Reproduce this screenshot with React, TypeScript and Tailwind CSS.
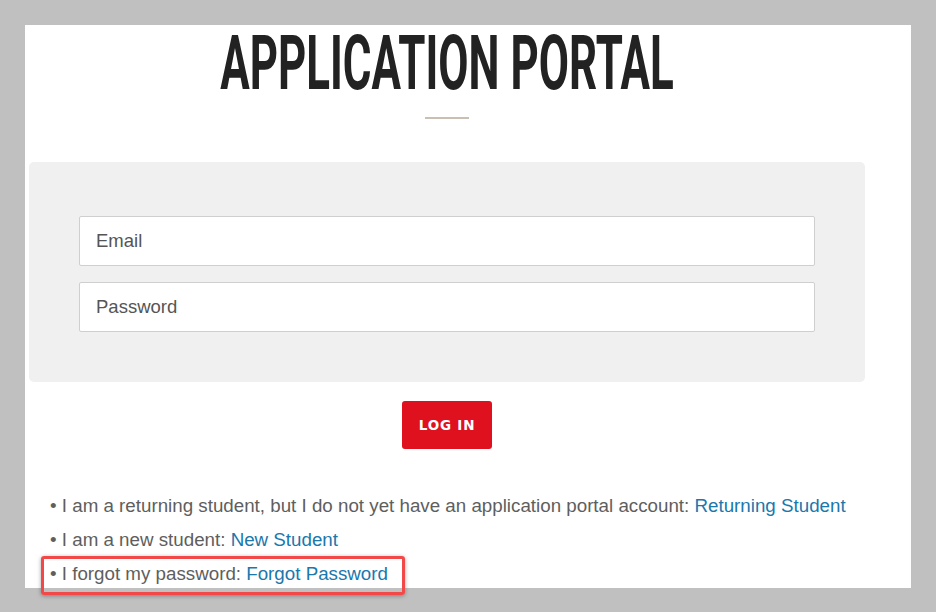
import { useState } from 'react';

const links = [
  { text: 'I am a returning student, but I do not yet have an application portal account:', link: 'Returning Student' },
  { text: 'I am a new student:', link: 'New Student' },
  { text: 'I forgot my password:', link: 'Forgot Password' },
];

export default function App() {
  const [email, setEmail] = useState('');
  const [password, setPassword] = useState('');

  return (
    <div className="h-[612px] overflow-hidden bg-[#c0c0c0] pl-[25px] pt-[25px] font-['Liberation_Sans',Arial,sans-serif]">
      <div className="relative h-[563px] w-[886px] bg-white">
        <div className="ml-[4px] flex w-[836px] flex-col items-center">
          {/* Title */}
          <h1 className="flex h-[77px] items-start justify-center">
            <span className="inline-block origin-center scale-x-[0.577] whitespace-nowrap font-['Roboto',sans-serif] text-[76px] font-bold leading-[76px] text-[#222]">
              APPLICATION PORTAL
            </span>
          </h1>
          <div className="mt-[15px] h-[2px] w-[44px] bg-[#c9bfb3]" />

          {/* Login form */}
          <form className="mt-[43px] flex w-full flex-col gap-4 rounded-[5px] bg-[#f0f0f0] px-[50px] pb-[50px] pt-[54px]">
            <input
              type="email"
              value={email}
              onChange={(e) => setEmail(e.target.value)}
              placeholder="Email"
              className="h-[50px] w-full rounded-[2px] border border-[#cfcfcf] bg-white px-4 text-[18.5px] text-[#555] outline-none placeholder:text-[#555]"
            />
            <input
              type="password"
              value={password}
              onChange={(e) => setPassword(e.target.value)}
              placeholder="Password"
              className="h-[50px] w-full rounded-[2px] border border-[#cfcfcf] bg-white px-4 text-[18.5px] text-[#555] outline-none placeholder:text-[#555]"
            />
          </form>

          <button
            type="button"
            className="mt-[19px] h-[48px] w-[90px] rounded-[3px] bg-[#df111f] font-['DejaVu_Sans',sans-serif] text-[13.5px] font-bold tracking-[0.8px] text-white"
          >
            LOG IN
          </button>

          {/* Links */}
          <ul className="mt-[40px] w-full pl-[21px] text-[18.75px] leading-[34px] text-[#5e5e5e]">
            {links.map((item) => (
              <li key={item.link} className="whitespace-nowrap">
                • {item.text}{' '}
                <a href="#" className="text-[#1a78ad]">
                  {item.link}
                </a>
              </li>
            ))}
          </ul>
        </div>

        {/* Annotation highlight */}
        <div className="pointer-events-none absolute left-[16px] top-[531px] h-[39px] w-[364px] rounded-[3px] border-[3px] border-[#f24848] shadow-[0_1px_4px_rgba(0,0,0,0.35)]" />
      </div>
    </div>
  );
}
